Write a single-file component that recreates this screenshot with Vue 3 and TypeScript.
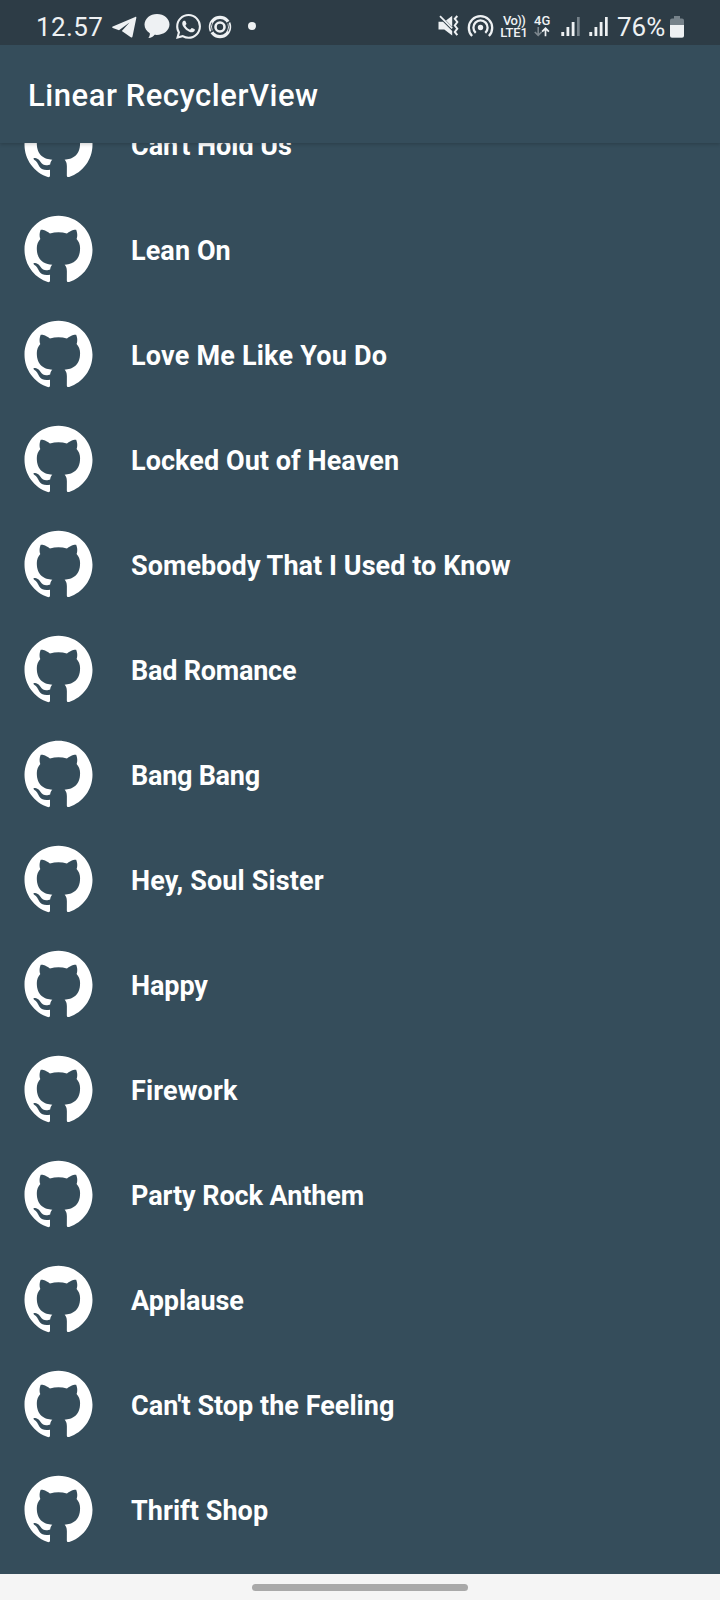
<script setup lang="ts">
import { ref } from 'vue'

interface Song {
  title: string
  tracking: number
}

const songs = ref<Song[]>([
  { title: "Can't Hold Us", tracking: -0.04 },
  { title: 'Lean On', tracking: 0.08 },
  { title: 'Love Me Like You Do', tracking: 0.2 },
  { title: 'Locked Out of Heaven', tracking: 0.06 },
  { title: 'Somebody That I Used to Know', tracking: 0.06 },
  { title: 'Bad Romance', tracking: -0.22 },
  { title: 'Bang Bang', tracking: -0.26 },
  { title: 'Hey, Soul Sister', tracking: 0.14 },
  { title: 'Happy', tracking: -0.1 },
  { title: 'Firework', tracking: 0.12 },
  { title: 'Party Rock Anthem', tracking: -0.08 },
  { title: 'Applause', tracking: -0.06 },
  { title: "Can't Stop the Feeling", tracking: 0.02 },
  { title: 'Thrift Shop', tracking: 0.05 },
])
</script>

<template>
  <div class="screen">
    <header class="status">
      <span class="clock">12.57</span>
      <svg class="telegram" width="26" height="22" viewBox="0 0 26 22">
        <path d="M24.200.900 1.800 10.600c-.9.400-.9 1.100 0 1.400L8 14.200 18.500 6.500 10.800 14.900 19.800 21.300c.9.600 1.500.3 1.700-.7L25.300 1.900C25.500 1 25 .5 24.200.9z" />
      </svg>
      <svg class="bubble" width="26" height="25" viewBox="0 0 26 25">
        <path d="M13 0C6 0 .5 4.700.5 10.500c0 3.700 2.100 6.800 5.300 8.700C6 21 5.500 22.500 4.300 24c3 0 5-1.300 6.300-3.200 8.200.9 14.900-4 14.900-10.300C25.500 4.700 20 0 13 0z" />
      </svg>
      <svg class="whatsapp" width="25" height="25" viewBox="0 0 24 24">
        <path d="M17.472 14.382c-.297-.149-1.758-.867-2.030-.967-.273-.099-.471-.148-.670.150-.197.297-.767.966-.940 1.164-.173.199-.347.223-.644.075-.297-.150-1.255-.463-2.390-1.475-.883-.788-1.480-1.761-1.653-2.059-.173-.297-.018-.458.130-.606.134-.133.298-.347.446-.520.149-.174.198-.298.298-.497.099-.198.050-.371-.025-.520-.075-.149-.669-1.612-.916-2.207-.242-.579-.487-.500-.669-.510-.173-.008-.371-.010-.570-.010-.198 0-.520.074-.792.372-.272.297-1.040 1.016-1.040 2.479 0 1.462 1.065 2.875 1.213 3.074.149.198 2.096 3.200 5.077 4.487.709.306 1.262.489 1.694.625.712.227 1.360.195 1.871.118.571-.085 1.758-.719 2.006-1.413.248-.694.248-1.289.173-1.413-.074-.124-.272-.198-.570-.347m-5.421 7.403h-.004a9.870 9.870 0 0 1-5.031-1.378l-.361-.214-3.741.982.998-3.648-.235-.374a9.860 9.860 0 0 1-1.510-5.260c.001-5.450 4.436-9.884 9.888-9.884 2.640 0 5.122 1.030 6.988 2.898a9.825 9.825 0 0 1 2.893 6.994c-.003 5.450-4.437 9.884-9.885 9.884m8.413-18.297A11.815 11.815 0 0 0 12.050 0C5.495 0 .160 5.335.157 11.892c0 2.096.547 4.142 1.588 5.945L.057 24l6.305-1.654a11.882 11.882 0 0 0 5.683 1.448h.005c6.554 0 11.890-5.335 11.893-11.893a11.821 11.821 0 0 0-3.480-8.413z" />
      </svg>
      <svg class="rings" width="24" height="24" viewBox="0 0 24 24">
        <g fill="none" stroke="#eef1f3">
          <circle cx="12" cy="12" r="4.500" stroke-width="2.600" />
          <circle cx="12" cy="12" r="9.600" stroke-width="3.200" />
        </g>
        <g fill="none" stroke="#2d3c46" stroke-width="1">
          <path d="M2 17.600 5.300 15.600M22 6.400 18.700 8.400" stroke-width="1.300" />
          <path d="M3.600 15.900A9.300 9.300 0 0 1 3.800 7.500M20.400 8.100A9.300 9.300 0 0 1 20.200 16.500" stroke-width=".8" />
        </g>
      </svg>
      <i class="dot"></i>

      <svg class="mute" width="22" height="22" viewBox="0 0 22 22">
        <path d="M.5 6.800h4.500L14.200 16v4.600L6.300 14.600H.5zM8 5.500 14.200.8V11.700z" />
        <path d="M2 1.200 14.200 13.400" fill="none" stroke="#eef1f3" stroke-width="1.800" />
        <path d="M19.300 1 16.800 3.800l2.500 3.200-2.500 3.500 2.500 3.200-2.500 3.200 2.500 3.200" fill="none" stroke="#eef1f3" stroke-width="2" />
      </svg>
      <svg class="hotspot" width="27" height="24" viewBox="0 0 27 24">
        <circle cx="13.500" cy="13.500" r="2.700" />
        <g fill="none" stroke="#eef1f3" stroke-width="2.300">
          <path d="M5.100 22A11.700 11.700 0 1 1 21.900 22" />
          <path d="M8.700 18.800A7.100 7.100 0 1 1 18.300 18.800" />
        </g>
      </svg>
      <span class="volte"><b class="vo">Vo))</b><b>LTE1</b></span>
      <span class="mobile">
        <b>4G</b>
        <svg width="16" height="11" viewBox="0 0 16 11">
          <path d="M4.200 0v8M.8 5l3.400 3.400L7.600 5" fill="none" stroke="#7d878e" stroke-width="1.600" />
          <path d="M11.500 9.300v-8M8.100 4.700l3.400-3.400 3.400 3.400" fill="none" stroke="#eef1f3" stroke-width="1.700" />
        </svg>
      </span>
      <svg class="signal" width="19" height="21" viewBox="0 0 19 21">
        <path d="M.3 16h2.900v4H.3zM5.500 11h2.800v9H5.500zM10.700 6h2.800v14h-2.800z" />
        <path d="M16 1h2.700v19H16z" fill="#76828a" />
      </svg>
      <svg class="signal second" width="19" height="21" viewBox="0 0 19 21">
        <path d="M.3 16h2.900v4H.3zM5.500 11h2.800v9H5.500zM10.700 6h2.800v14h-2.800zM16 1h2.700v19H16z" />
      </svg>
      <span class="percent">76%</span>
      <svg class="battery" width="14" height="23" viewBox="0 0 14 23">
        <path d="M4 0h6v2.500h2a2 2 0 0 1 2 2V20a2 2 0 0 1-2 2H2a2 2 0 0 1-2-2V4.500a2 2 0 0 1 2-2h2z" fill="#76828a" />
        <path d="M0 9h14V19.500a2 2 0 0 1-2 2H2a2 2 0 0 1-2-2z" />
      </svg>
    </header>

    <div class="appbar"><h1>Linear RecyclerView</h1></div>

    <main class="viewport">
      <ul class="list">
        <li v-for="song in songs" :key="song.title" class="row">
          <svg class="avatar" viewBox="-0.176 0 24.353 24">
            <path d="M12 .297c-6.630 0-12 5.373-12 12 0 5.303 3.438 9.800 8.205 11.385.600.113.820-.258.820-.577 0-.285-.010-1.040-.015-2.040-3.338.724-4.042-1.610-4.042-1.610C4.422 18.070 3.633 17.700 3.633 17.700c-1.087-.744.084-.729.084-.729 1.205.084 1.838 1.236 1.838 1.236 1.070 1.835 2.809 1.305 3.495.998.108-.776.417-1.305.760-1.605-2.665-.300-5.466-1.332-5.466-5.930 0-1.310.465-2.380 1.235-3.220-.135-.303-.540-1.523.105-3.176 0 0 1.005-.322 3.300 1.230.960-.267 1.980-.399 3-.405 1.020.006 2.040.138 3 .405 2.280-1.552 3.285-1.230 3.285-1.230.645 1.653.240 2.873.120 3.176.765.840 1.230 1.910 1.230 3.220 0 4.610-2.805 5.625-5.475 5.920.420.360.810 1.096.810 2.220 0 1.606-.015 2.896-.015 3.286 0 .315.210.690.825.570C20.565 22.092 24 17.592 24 12.297c0-6.627-5.373-12-12-12" />
          </svg>
          <span class="title" :style="{ letterSpacing: `${song.tracking}px` }">{{ song.title }}</span>
        </li>
      </ul>
    </main>

    <footer class="nav"><i class="handle"></i></footer>
  </div>
</template>

<style>
body {
  margin: 0;
  background: #354d5b;
}
</style>

<style scoped>
.screen {
  display: flex;
  flex-direction: column;
  width: 720px;
  height: 1600px;
  overflow: hidden;
  background: #354d5b;
  color: #fff;
  font-family: Roboto, 'Liberation Sans', sans-serif;
}
.status {
  display: flex;
  flex: none;
  align-items: flex-start;
  box-sizing: border-box;
  height: 45px;
  padding-left: 36px;
  background: #2d3c46;
  color: #eef1f3;
}
.status svg {
  flex: none;
  fill: #eef1f3;
}
.clock,
.percent {
  flex: none;
  margin-top: 12px;
  font-size: 26px;
  line-height: 30px;
  white-space: nowrap;
}
.clock { width: 75px; letter-spacing: 0.4px; }
.telegram { margin-top: 16px; }
.bubble { margin: 14px 0 0 7px; }
.whatsapp { margin: 14px 0 0 6px; }
.rings { margin: 15px 0 0 7px; }
.dot {
  flex: none;
  width: 8px;
  height: 8px;
  margin: 22px 0 0 16px;
  border-radius: 50%;
  background: #eef1f3;
}
.mute { margin: 15px 0 0 auto; }
.hotspot { margin: 14px 0 0 7px; }
.volte,
.mobile {
  display: flex;
  flex: none;
  flex-direction: column;
  margin-top: 15px;
  font-size: 13px;
  line-height: 12px;
}
.volte b,
.mobile b { font-weight: 500; }
.volte { align-items: center; width: 26px; margin-left: 7px; letter-spacing: -0.2px; }
.volte .vo { letter-spacing: -0.6px; }
.mobile { width: 17px; margin-left: 7px; }
.signal { margin: 16px 0 0 10px; }
.signal.second { margin-left: 9px; }
.percent { width: 49px; margin-left: 9px; }
.battery { margin: 16px 36px 0 4px; }
.appbar {
  z-index: 1;
  display: flex;
  flex: none;
  align-items: center;
  height: 98px;
  padding-left: 28px;
  background: #354d5b;
  clip-path: inset(0 0 -8px 0);
  box-shadow: 0 1px 4px rgba(0, 0, 0, 0.22);
}
.appbar h1 {
  margin: 4px 0 0;
  font-size: 31px;
  font-weight: 500;
  line-height: 36px;
  letter-spacing: 0.54px;
}
.viewport {
  flex: 1;
  min-height: 0;
  overflow: hidden;
}
.list {
  margin: -52px 0 0;
  padding: 0;
  list-style: none;
}
.row {
  display: flex;
  align-items: center;
  height: 105px;
  padding-left: 24px;
}
.avatar {
  flex: none;
  width: 69px;
  height: 68px;
  fill: #fff;
}
.title {
  margin: 5px 0 0 38px;
  font-size: 27px;
  font-weight: 700;
  line-height: 32px;
  white-space: nowrap;
}
.nav {
  display: flex;
  flex: none;
  justify-content: center;
  height: 26px;
  background: #f5f5f5;
}
.handle {
  width: 216px;
  height: 7px;
  margin-top: 10px;
  border-radius: 4px;
  background: #a9a9a9;
}
</style>
